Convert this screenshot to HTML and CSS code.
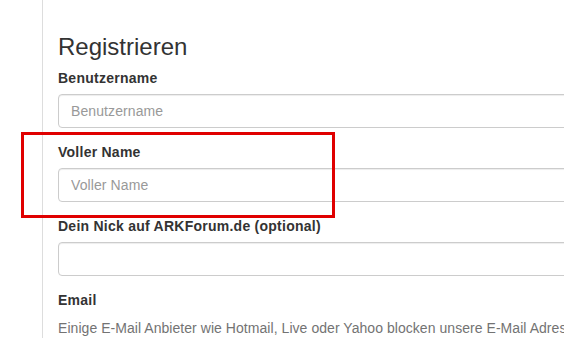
FILE: index.html
```html
<!doctype html>
<html>
<head>
	<meta charset="utf-8" />
	<title>Registrieren</title>
	<link rel="stylesheet" href="styles.css">
</head>
<body>
	<div class="page">
		<div class="content">
			<h3>Registrieren</h3>
			<div class="form-group">
				<label for="username">Benutzername</label>
				<input type="text" id="username" class="form-control" placeholder="Benutzername" />
			</div>
			<div class="form-group">
				<label for="fullname">Voller Name</label>
				<input type="text" id="fullname" class="form-control" placeholder="Voller Name" />
			</div>
			<div class="form-group">
				<label for="nick">Dein Nick auf ARKForum.de (optional)</label>
				<input type="text" id="nick" class="form-control" />
			</div>
			<div class="form-group">
				<label for="email">Email</label>
				<p class="help-block">Einige E-Mail Anbieter wie Hotmail, Live oder Yahoo blocken unsere E-Mail Adressen. Bitte nutze eine andere Adresse.</p>
			</div>
		</div>
	</div>
	<div class="highlight"></div>
</body>
</html>
```

FILE: styles.css
```css
html, body { margin: 0; padding: 0; overflow: hidden; background: #fff; }
body { font-family: 'Liberation Sans', Arial, sans-serif; font-size: 14px; line-height: 1.42857; color: #333; }
.page { padding-left: 42px; }
.content { width: 900px; min-height: 338px; border-left: 1px solid #ddd; padding-left: 15px; }
h3 { font-size: 24px; font-weight: 500; line-height: 1.1; margin: 0 0 9px 0; padding-top: 34px; }
.form-group { margin-bottom: 15px; }
label { display: block; font-weight: bold; margin-bottom: 5px; letter-spacing: 0.25px; }
.form-control { display: block; box-sizing: border-box; width: 620px; height: 34px; padding: 6px 12px; font-family: inherit; font-size: 14px; color: #555; background: #fff; border: 1px solid #ccc; border-radius: 4px; box-shadow: inset 0 1px 1px rgba(0,0,0,.075); margin: 0; }
.form-control::placeholder { color: #999; letter-spacing: 0.1px; }
.help-block { margin: 8px 0 10px 0; color: #737373; white-space: nowrap; letter-spacing: 0.05px; }
.highlight { position: absolute; left: 21px; top: 132px; width: 308px; height: 80px; border: 3px solid #e00000; }
```
